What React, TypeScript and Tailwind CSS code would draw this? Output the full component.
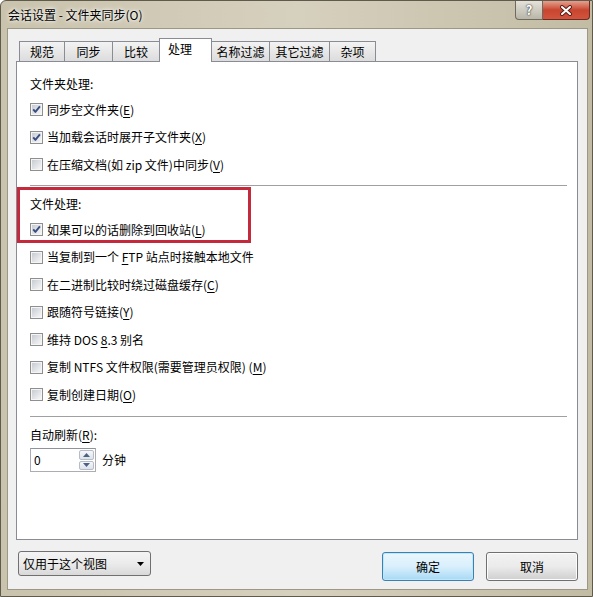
import type { ReactNode } from "react";

const font = "font-['Noto_Sans_CJK_SC','Noto_Sans',sans-serif]";

const tabs = [
  { label: "规范", w: "w-[46px]" },
  { label: "同步", w: "w-[49px]" },
  { label: "比较", w: "w-[48px]" },
  { label: "处理", w: "w-[53px]", active: true },
  { label: "名称过滤", w: "w-[59px]" },
  { label: "其它过滤", w: "w-[61px]" },
  { label: "杂项", w: "w-[47px]" },
];

function CheckBox({ checked }: { checked?: boolean }) {
  return (
    <svg width="13" height="13" viewBox="0 0 13 13" className="shrink-0">
      <defs>
        <linearGradient id="cbin" x1="0" y1="0" x2="1" y2="1">
          <stop offset="0" stopColor="#c7ccd3" />
          <stop offset="1" stopColor="#f6f6f6" />
        </linearGradient>
      </defs>
      <rect x="0.5" y="0.5" width="12" height="12" fill="#f5f5f5" stroke="#8e8f8f" />
      <rect x="2" y="2" width="9" height="9" fill="url(#cbin)" />
      {checked && (
        <path
          d="M3.2 6.4 L5.4 8.9 L9.9 3.4"
          stroke="#3a4d80"
          strokeWidth="1.9"
          fill="none"
          strokeLinejoin="round"
        />
      )}
    </svg>
  );
}

function Row({ checked, children }: { checked?: boolean; children: ReactNode }) {
  return (
    <div className="flex h-[27.5px] items-center gap-[4px]">
      <CheckBox checked={checked} />
      <span className="whitespace-nowrap">{children}</span>
    </div>
  );
}

const U = ({ children }: { children: ReactNode }) => (
  <span className="underline underline-offset-[2px]">{children}</span>
);

export default function App() {
  return (
    <div
      className={`${font} flex h-[597px] w-[593px] flex-col overflow-hidden rounded-tl-[6px] border border-[#5f5b4c] bg-gradient-to-r from-[#c9c2ac] via-[#d6d0be] to-[#c3bca4] text-[12px] leading-[16px] text-black`}
    >
      {/* title bar */}
      <div className="flex h-[27px] shrink-0 items-start">
        <div className="pl-[7px] pt-[6px] [text-shadow:0_0_6px_#fff,0_0_3px_#fff]">
          会话设置 - 文件夹同步(O)
        </div>
        <div className="ml-auto mr-[2px] flex">
          <div className="flex h-[19px] w-[28px] items-center justify-center rounded-bl-[4px] border border-t-0 border-[#6d6a5f] bg-gradient-to-b from-[#e4e2da] to-[#b9b6a8] text-[13px] font-bold text-white [text-shadow:0_0_2px_#333,0_0_1px_#333]">
            ?
          </div>
          <div className="flex h-[19px] w-[47px] items-center justify-center rounded-br-[4px] border border-l-0 border-t-0 border-[#6b2a22] bg-gradient-to-b from-[#e3a08f] via-[#c8452f] to-[#d2543e]">
            <svg width="14" height="11" viewBox="0 0 14 11">
              <path d="M3 2 L11 9 M11 2 L3 9" stroke="#5a1e17" strokeWidth="4" strokeLinecap="round" />
              <path d="M3 2 L11 9 M11 2 L3 9" stroke="#fff" strokeWidth="2" strokeLinecap="round" />
            </svg>
          </div>
        </div>
      </div>

      {/* client area */}
      <div className="mb-[6px] ml-[6px] mr-[4px] flex flex-1 flex-col border border-[#9c9886] bg-[#f0f0f0] pl-[8px] pr-[9px] pt-[9px]">
        {/* tabs */}
        <div className="flex h-[23px] items-end pl-[3px]">
          {tabs.map((t) =>
            t.active ? (
              <div
                key={t.label}
                className={`${t.w} relative z-10 -mb-px -ml-px h-[24px] border border-b-0 border-[#898c95] bg-white pl-[8px] pt-[2px]`}
              >
                {t.label}
              </div>
            ) : (
              <div
                key={t.label}
                className={`${t.w} -ml-px h-[20px] border border-b-0 border-[#898c95] bg-gradient-to-b from-[#f3f3f3] to-[#dcdcdc] pt-[2px] text-center first:ml-0`}
              >
                {t.label}
              </div>
            )
          )}
        </div>

        {/* panel */}
        <div className="relative h-[479px] border border-[#898c95] bg-white pl-[13px] pr-[10px] pt-[10px]">
          <div className="flex h-[24px] items-center">文件夹处理:</div>
          <Row checked>
            同步空文件夹(<U>E</U>)
          </Row>
          <Row checked>
            当加载会话时展开子文件夹(<U>X</U>)
          </Row>
          <Row>
            在压缩文档(如 zip 文件)中同步(<U>V</U>)
          </Row>

          <div className="mt-[6.5px] h-px bg-[#a0a0a0]" />

          <div className="mt-[6px] flex h-[24px] items-center">文件处理:</div>
          <Row checked>
            如果可以的话删除到回收站(<U>L</U>)
          </Row>
          <Row>
            当复制到一个 <U>F</U>TP 站点时接触本地文件
          </Row>
          <Row>
            在二进制比较时绕过磁盘缓存(<U>C</U>)
          </Row>
          <Row>
            跟随符号链接(<U>Y</U>)
          </Row>
          <Row>
            维持 DOS <U>8</U>.3 别名
          </Row>
          <Row>
            复制 NTFS 文件权限(需要管理员权限) (<U>M</U>)
          </Row>
          <Row>
            复制创建日期(<U>O</U>)
          </Row>

          <div className="mt-[7.5px] h-px bg-[#a0a0a0]" />

          <div className="mt-[6px] flex h-[24px] items-center">
            自动刷新(<U>R</U>):
          </div>
          <div className="mt-px flex items-center gap-[6px]">
            <div className="flex h-[24px] w-[66px] border border-[#abadb3] border-t-[#8f9299] bg-white">
              <div className="flex-1 pl-[3px] pt-[3px]">0</div>
              <div className="flex w-[16px] flex-col gap-px py-px pr-px">
                <div className="flex flex-1 items-center justify-center rounded-[2px] border border-[#b6bcc6] bg-gradient-to-b from-[#f6f8fb] to-[#dde3ea]">
                  <svg width="7" height="4" viewBox="0 0 7 4">
                    <path d="M0 4 L3.5 0 L7 4 Z" fill="#4d6185" />
                  </svg>
                </div>
                <div className="flex flex-1 items-center justify-center rounded-[2px] border border-[#b6bcc6] bg-gradient-to-b from-[#f6f8fb] to-[#dde3ea]">
                  <svg width="7" height="4" viewBox="0 0 7 4">
                    <path d="M0 0 L3.5 4 L7 0 Z" fill="#4d6185" />
                  </svg>
                </div>
              </div>
            </div>
            <span>分钟</span>
          </div>

          {/* annotation box */}
          <div className="pointer-events-none absolute left-0 top-[125px] h-[56px] w-[234px] border-[3px] border-[#c42a3b]" />
        </div>

        {/* bottom row */}
        <div className="mt-[11px] flex items-start">
          <div className="ml-[2px] flex h-[25px] w-[133px] items-center rounded-[3px] border border-[#707070] bg-gradient-to-b from-[#f4f4f4] via-[#ebebeb] to-[#d9d9d9] pl-[4px] pr-[6px]">
            <span className="flex-1">仅用于这个视图</span>
            <svg width="7" height="4" viewBox="0 0 7 4">
              <path d="M0 0 L7 0 L3.5 4 Z" fill="#000" />
            </svg>
          </div>
          <div className="ml-auto mt-px flex gap-[12px]">
            <div className="flex h-[29px] w-[92px] items-center justify-center rounded-[3px] border border-[#3c7fb1] bg-gradient-to-b from-[#eaf6fd] via-[#d9f0fc] to-[#a7d9f5] shadow-[inset_0_0_0_1px_#bfe7fb]">
              确定
            </div>
            <div className="flex h-[29px] w-[92px] items-center justify-center rounded-[3px] border border-[#707070] bg-gradient-to-b from-[#f2f2f2] via-[#ebebeb] to-[#cfcfcf] shadow-[inset_0_0_0_1px_#fcfcfc]">
              取消
            </div>
          </div>
        </div>
      </div>
    </div>
  );
}
